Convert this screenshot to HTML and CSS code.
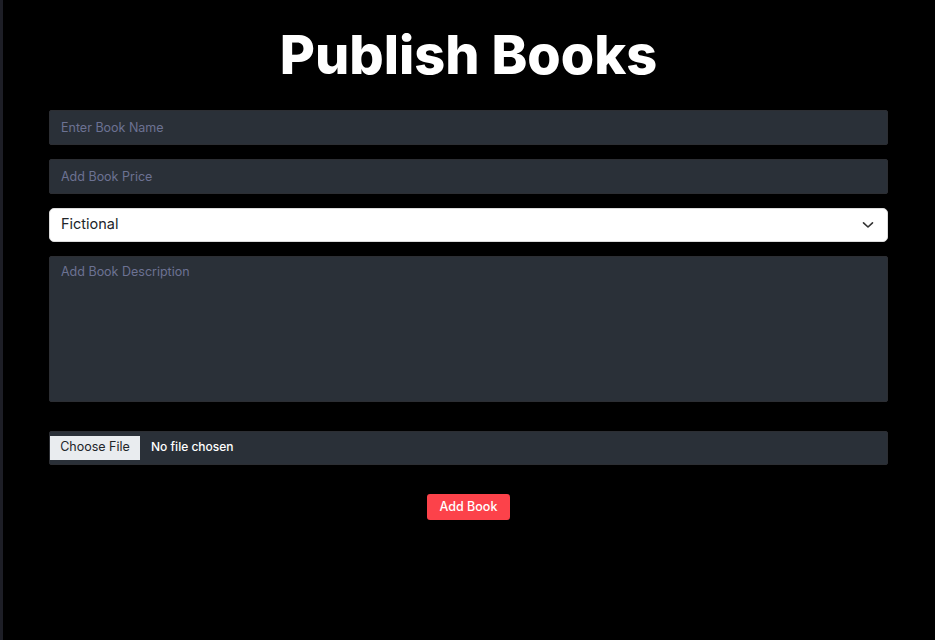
FILE: index.html
```html
<!DOCTYPE html>
<html lang="en">
<head>
<meta charset="utf-8">
<title>Publish Books</title>
<link rel="stylesheet" href="styles.css">
</head>
<body>
<div class="page">
  <main class="content">
    <h1 class="title">Publish Books</h1>
    <form class="book-form">
      <input class="field" type="text" placeholder="Enter Book Name">
      <input class="field" type="text" placeholder="Add Book Price">
      <div class="select-wrap">
        <select class="select">
          <option>Fictional</option>
          <option>Non-Fictional</option>
        </select>
        <svg class="chevron" width="12" height="8" viewBox="0 0 12 8" aria-hidden="true"><path d="M1.5 1.8 L6 6 L10.5 1.8" fill="none" stroke="#333" stroke-width="1.6" stroke-linecap="round" stroke-linejoin="round"/></svg>
      </div>
      <textarea class="field area" placeholder="Add Book Description"></textarea>
      <div class="file-row">
        <span class="file-btn">Choose File</span>
        <span class="file-name">No file chosen</span>
      </div>
      <div class="actions">
        <button class="btn" type="button">Add Book</button>
      </div>
    </form>
  </main>
</div>
</body>
</html>
```

FILE: styles.css
```css
* { box-sizing: border-box; }
html, body { margin: 0; padding: 0; background: #000; }
body {
  font-family: "Inter", "Liberation Sans", sans-serif;
  color: #fff;
  height: 640px;
  overflow: hidden;
}
.page {
  border-left: 3px solid #1d1e26;
  min-height: 640px;
  background: #000;
}
.content {
  padding: 0 47px 0 46px;
}
.title {
  margin: 0;
  padding-top: 25px;
  height: 110px;
  text-align: center;
  font-size: 54px;
  font-weight: 800;
  line-height: 60px;
  letter-spacing: 0;
  color: #fff;
}
.book-form {
  display: flex;
  flex-direction: column;
}
.field {
  display: block;
  width: 100%;
  height: 35px;
  background: #2a3038;
  border: 1px solid #2c2e33;
  border-radius: 2px;
  color: #fff;
  font-family: inherit;
  font-size: 12.5px;
  padding: 0 11px;
  outline: none;
  margin-bottom: 14px;
}
.field::placeholder { color: #6c7293; }
.select-wrap {
  position: relative;
  margin-bottom: 14px;
}
.select {
  display: block;
  width: 100%;
  height: 34px;
  appearance: none;
  -webkit-appearance: none;
  background: #fff;
  border: 1px solid #dcdcdc;
  border-radius: 5px;
  color: #212529;
  font-family: inherit;
  font-size: 14.5px;
  padding: 0 11px 3px;
}
.chevron {
  position: absolute;
  right: 14px;
  top: 13px;
}
.area {
  height: 146px;
  resize: none;
  padding-top: 7px;
  line-height: 16px;
  margin-bottom: 29px;
}
.file-row {
  display: flex;
  align-items: center;
  gap: 11px;
  height: 34px;
  background: #2a3038;
  border: 1px solid #2c2e33;
  border-radius: 2px;
}
.file-btn {
  display: flex;
  align-items: center;
  justify-content: center;
  width: 90px;
  height: 24px;
  padding-bottom: 3px;
  background: #e9ecef;
  color: #212529;
  font-size: 12.5px;
}
.file-name {
  color: #fff;
  font-size: 12px;
  font-weight: 500;
  padding-bottom: 3px;
}
.actions {
  display: flex;
  justify-content: center;
  padding-top: 29px;
}
.btn {
  background: #fc424a;
  color: #fff;
  border: none;
  border-radius: 3px;
  height: 26px;
  width: 83px;
  padding: 0 0 2px;
  font-family: inherit;
  font-size: 12.5px;
  font-weight: 500;
}
```
